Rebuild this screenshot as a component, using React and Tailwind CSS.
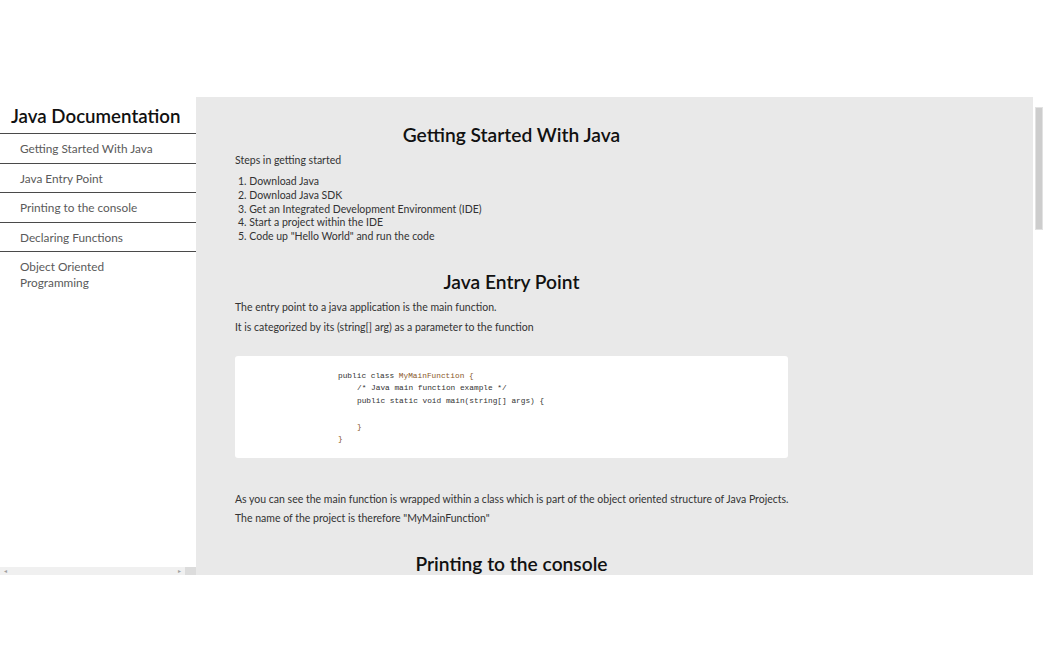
import React from 'react';

const navItems = [
  'Getting Started With Java',
  'Java Entry Point',
  'Printing to the console',
  'Declaring Functions',
  'Object Oriented Programming',
];

const steps = [
  'Download Java',
  'Download Java SDK',
  'Get an Integrated Development Environment (IDE)',
  'Start a project within the IDE',
  'Code up "Hello World" and run the code',
];

function Sidebar() {
  return (
    <nav className="w-[196px] h-full flex flex-col bg-white flex-shrink-0">
      <div className="flex-1 overflow-hidden">
        <h1 className="h-[36px] pl-[11px] pt-[6px] whitespace-nowrap text-[18.7px] leading-[26px] font-semibold text-[#111]">
          Java Documentation
        </h1>
        <ul>
          {navItems.map((item) => (
            <li
              key={item}
              className="border-t border-[#4a4a4a] pl-[20px] pr-[36px] pt-[7px] pb-[5.5px] text-[11.8px] leading-[16px] text-[#5a5a5a]"
            >
              {item}
            </li>
          ))}
        </ul>
      </div>
      {/* fake horizontal scrollbar */}
      <div className="h-[8px] flex">
        <div className="flex-1 bg-[#f0f0f0] flex items-center justify-between px-[4px]">
          <span className="text-[6px] leading-none text-[#a0a0a0]">◂</span>
          <span className="text-[6px] leading-none text-[#a0a0a0]">▸</span>
        </div>
        <div className="w-[11px] bg-[#dcdcdc]" />
      </div>
    </nav>
  );
}

function CodeBlock() {
  const brace = 'text-[#8a5a2b]';
  return (
    <div className="w-[553px] h-[102px] bg-white rounded-[3px] pl-[103px] pt-[14px] font-['Liberation_Mono',monospace] text-[7.8px] leading-[12.7px] text-[#333] whitespace-pre">
      <div>
        public class <span className={brace}>MyMainFunction</span> <span className={brace}>{'{'}</span>
      </div>
      <div className="pl-[19px]">/* Java main function example */</div>
      <div className="pl-[19px]">public static void main(string[] args) {'{'}</div>
      <div className="h-[12.7px]" />
      <div className="pl-[19px]">
        <span className={brace}>{'}'}</span>
      </div>
      <div>
        <span className={brace}>{'}'}</span>
      </div>
    </div>
  );
}

export default function App() {
  return (
    <div className="w-[1045px] h-[672px] bg-white font-['Lato','Open_Sans',sans-serif]">
      <div className="h-[97px]" />
      <div className="h-[478px] flex">
        <Sidebar />
        <main className="flex-1 bg-[#e9e9e9] overflow-hidden pl-[39px] text-[#333]">
          <div className="w-[553px]">
            <h2 className="pt-[24px] text-center text-[19.2px] leading-[28px] font-semibold text-[#111]">
              Getting Started With Java
            </h2>
            <p className="mt-[4px] text-[10.5px] leading-[14px]">Steps in getting started</p>
            <ol className="mt-[8px] pl-[3px] text-[10.5px] leading-[13.75px]">
              {steps.map((s, i) => (
                <li key={s}>
                  {i + 1}. {s}
                </li>
              ))}
            </ol>
            <h2 className="mt-[24px] text-center text-[19.2px] leading-[28px] font-semibold text-[#111]">
              Java Entry Point
            </h2>
            <p className="mt-[4px] text-[10.5px] leading-[14px]">
              The entry point to a java application is the main function.
            </p>
            <p className="mt-[6px] text-[10.5px] leading-[14px]">
              It is categorized by its (string[] arg) as a parameter to the function
            </p>
            <div className="mt-[22px]">
              <CodeBlock />
            </div>
            <p className="mt-[34px] text-[10.5px] leading-[14px] whitespace-nowrap">
              As you can see the main function is wrapped within a class which is part of the object oriented structure of Java Projects.
            </p>
            <p className="mt-[5px] text-[10.5px] leading-[14px]">
              The name of the project is therefore "MyMainFunction"
            </p>
            <h2 className="mt-[25px] text-center text-[19.2px] leading-[28px] font-semibold text-[#111]">
              Printing to the console
            </h2>
          </div>
        </main>
        {/* fake vertical scrollbar */}
        <div className="w-[12px] bg-white pt-[10px] px-[2px]">
          <div className="h-[123px] bg-[#cdcdcd] border border-[#e2e2e2]" />
        </div>
      </div>
    </div>
  );
}
